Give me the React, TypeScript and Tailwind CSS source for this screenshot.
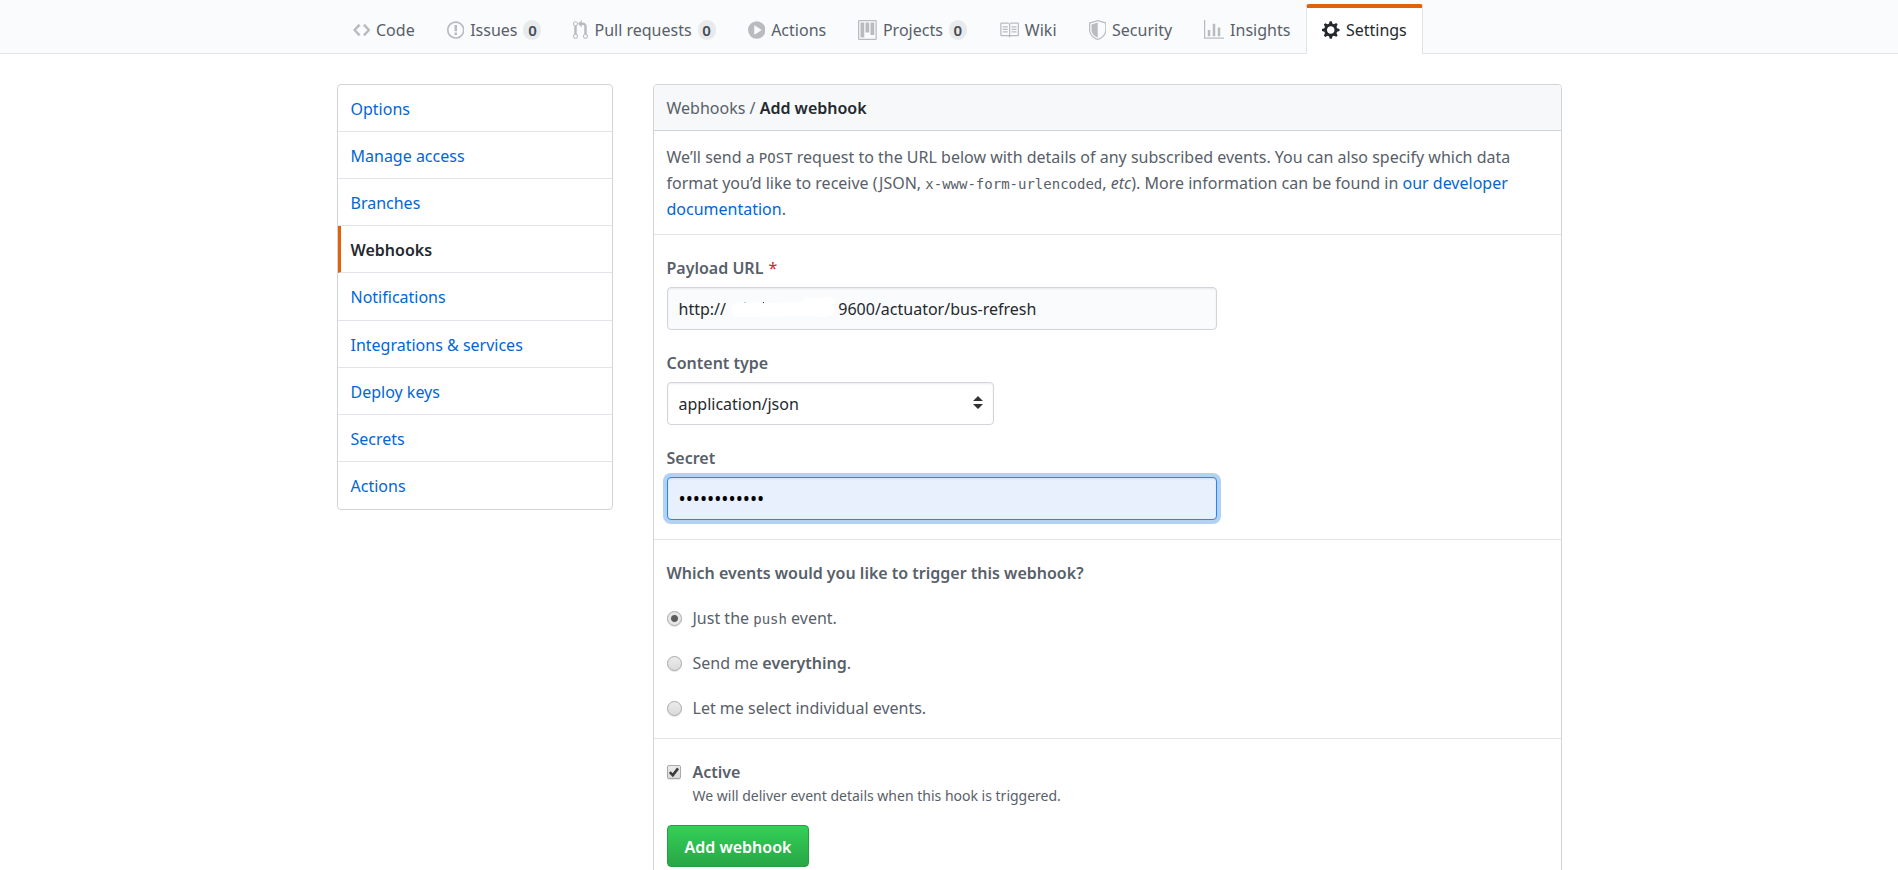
import type { ReactNode } from "react";

type IconProps = { path: string; width: number; evenOdd?: boolean };

function Octicon({ path, width, evenOdd }: IconProps) {
  return (
    <svg
      aria-hidden="true"
      viewBox={`0 0 ${width} 16`}
      className="h-5 w-auto shrink-0"
      fill="currentColor"
      fillRule={evenOdd ? "evenodd" : "nonzero"}
    >
      <path d={path} />
    </svg>
  );
}

type Tab = IconProps & { label: string; count?: number; selected?: boolean };

const tabs: Tab[] = [
  {
    label: "Code",
    width: 14,
    path: "M9.5 3L8 4.5 11.5 8 8 11.5 9.5 13 14 8 9.5 3zm-5 0L0 8l4.5 5L6 11.5 2.5 8 6 4.5 4.5 3z",
  },
  {
    label: "Issues",
    count: 0,
    width: 14,
    path: "M7 2.3c3.14 0 5.7 2.56 5.7 5.7s-2.56 5.7-5.7 5.7A5.71 5.71 0 0 1 1.3 8c0-3.14 2.56-5.7 5.7-5.7zM7 1C3.14 1 0 4.14 0 8s3.14 7 7 7 7-3.14 7-7-3.14-7-7-7zm1 3H6v5h2V4zm0 6H6v2h2v-2z",
    evenOdd: true,
  },
  {
    label: "Pull requests",
    count: 0,
    width: 12,
    path: "M11 11.28V5c-.03-.78-.34-1.47-.94-2.06C9.46 2.35 8.78 2.03 8 2H7V0L4 3l3 3V4h1c.27.02.48.11.69.31.21.2.3.42.31.69v6.28A1.993 1.993 0 0 0 10 15a1.993 1.993 0 0 0 1-3.72zm-1 2.92c-.66 0-1.2-.55-1.2-1.2 0-.65.55-1.2 1.2-1.2.65 0 1.2.55 1.2 1.2 0 .65-.55 1.2-1.2 1.2zM4 3c0-1.11-.89-2-2-2a1.993 1.993 0 0 0-1 3.72v6.56A1.993 1.993 0 0 0 2 15a1.993 1.993 0 0 0 1-3.72V4.72c.59-.34 1-.98 1-1.72zm-.8 10c0 .66-.55 1.2-1.2 1.2-.65 0-1.2-.55-1.2-1.2 0-.65.55-1.2 1.2-1.2.65 0 1.2.55 1.2 1.2zM2 4.2C1.34 4.2.8 3.65.8 3c0-.65.55-1.2 1.2-1.2.65 0 1.2.55 1.2 1.2 0 .65-.55 1.2-1.2 1.2z",
    evenOdd: true,
  },
  {
    label: "Actions",
    width: 14,
    path: "M14 8A7 7 0 1 1 0 8a7 7 0 0 1 14 0zm-8.223 3.482l4.599-3.066a.5.5 0 0 0 0-.832L5.777 4.518A.5.5 0 0 0 5 4.934v6.132a.5.5 0 0 0 .777.416z",
    evenOdd: true,
  },
  {
    label: "Projects",
    count: 0,
    width: 15,
    path: "M10 12h3V2h-3v10zm-4-2h3V2H6v8zm-4 4h3V2H2v12zm-1 1h13V1H1v14zM14 0H1a1 1 0 0 0-1 1v14a1 1 0 0 0 1 1h13a1 1 0 0 0 1-1V1a1 1 0 0 0-1-1z",
    evenOdd: true,
  },
  {
    label: "Wiki",
    width: 16,
    path: "M3 5h4v1H3V5zm0 3h4V7H3v1zm0 2h4V9H3v1zm11-5h-4v1h4V5zm0 2h-4v1h4V7zm0 2h-4v1h4V9zm2-6v9c0 .55-.45 1-1 1H9.5l-1 1-1-1H2c-.55 0-1-.45-1-1V3c0-.55.45-1 1-1h5.5l1 1 1-1H15c.55 0 1 .45 1 1zm-8 .5L7.5 3H2v9h6V3.5zm7-.5H9.5l-.5.5V12h6V3z",
    evenOdd: true,
  },
  {
    label: "Security",
    width: 14,
    path: "M0 2l7-2 7 2v6.02C14 12.69 8.69 16 7 16c-1.69 0-7-3.31-7-7.98V2zm1 .75L7 1l6 1.75v5.268C13 12.104 8.449 15 7 15c-1.449 0-6-2.896-6-6.982V2.75zm1 .75L7 2v12c-1.207 0-5-2.482-5-5.985V3.5z",
    evenOdd: true,
  },
  {
    label: "Insights",
    width: 16,
    path: "M16 14v1H0V0h1v14h15zM5 13H3V8h2v5zm4 0H7V3h2v10zm4 0h-2V6h2v7z",
  },
  {
    label: "Settings",
    selected: true,
    width: 14,
    path: "M14 8.77v-1.6l-1.94-.64-.45-1.09.88-1.84-1.13-1.13-1.81.91-1.09-.45-.69-1.92h-1.6l-.63 1.94-1.11.45-1.84-.88-1.13 1.13.91 1.81-.45 1.09L0 7.23v1.59l1.94.64.45 1.09-.88 1.84 1.13 1.13 1.81-.91 1.09.45.69 1.92h1.59l.63-1.94 1.11-.45 1.84.88 1.13-1.13-.92-1.81.47-1.09L14 8.75v.02zM7 11c-1.66 0-3-1.34-3-3s1.34-3 3-3 3 1.34 3 3-1.34 3-3 3z",
    evenOdd: true,
  },
];

const menu = [
  "Options",
  "Manage access",
  "Branches",
  "Webhooks",
  "Notifications",
  "Integrations & services",
  "Deploy keys",
  "Secrets",
  "Actions",
];

function RepoNav() {
  return (
    <header className="border-b border-[#e1e4e8] bg-[#fafbfc] pt-1">
      <nav aria-label="Repository" className="mx-auto flex max-w-[1225px]">
        {tabs.map((tab) => (
          <a
            key={tab.label}
            href="#"
            aria-current={tab.selected ? "page" : undefined}
            className={
              tab.selected
                ? "-mb-px flex h-[50px] items-center gap-[6px] rounded-t-[3px] border-x border-t-4 border-x-[#e1e4e8] border-t-[#e36209] bg-white px-[15px] pb-[2px] text-[#24292e]"
                : "flex h-[49px] items-center gap-[6px] border-x border-t-4 border-transparent px-[15px] pb-[2px] text-[#586069]"
            }
          >
            <span className={tab.selected ? "text-[#24292e]" : "text-[#b9bcbf]"}>
              <Octicon path={tab.path} width={tab.width} evenOdd={tab.evenOdd} />
            </span>
            {tab.label}
            {tab.count !== undefined && (
              <span className="flex h-5 w-[18px] items-center justify-center rounded-full bg-[#e8eaeb] text-[15px] font-semibold text-[#444d56]">
                {tab.count}
              </span>
            )}
          </a>
        ))}
      </nav>
    </header>
  );
}

function Sidebar() {
  return (
    <nav
      aria-label="Settings"
      className="grid min-h-[426px] w-[276px] shrink-0 auto-rows-fr divide-y divide-[#e1e4e8] rounded-[4px] border border-[#d1d5da]"
    >
      {menu.map((item) => (
        <a
          key={item}
          href="#"
          className={
            item === "Webhooks"
              ? "block border-l-[3px] border-l-[#e36209] pt-[11px] pb-[9px] pl-[10px] font-semibold text-[#24292e]"
              : "block pt-[11px] pb-[9px] pl-[13px] text-[#0366d6]"
          }
        >
          {item}
        </a>
      ))}
    </nav>
  );
}

const field = "block h-[43px] rounded-[4px] border px-[11px] outline-none";

function Code({ children }: { children: ReactNode }) {
  return (
    <code className="font-['DejaVu_Sans_Mono',monospace] text-[14px] leading-none">{children}</code>
  );
}

function EventOption({
  id,
  checked,
  children,
}: {
  id: string;
  checked?: boolean;
  children: ReactNode;
}) {
  return (
    <div className="flex items-center gap-[11px]">
      <input
        type="radio"
        name="events"
        id={id}
        defaultChecked={checked}
        className="size-[15px] appearance-none rounded-full border border-[#a9a9a9] bg-linear-to-b from-[#ececec] to-[#dadada] shadow-[0_1px_1px_rgba(0,0,0,0.1)] checked:bg-[radial-gradient(circle,#5c5c5c_3px,#e6e6e6_4px)]"
      />
      <label htmlFor={id}>{children}</label>
    </div>
  );
}

export default function App() {
  return (
    <div className="min-h-screen bg-white font-['Noto_Sans','Liberation_Sans',sans-serif] text-[16px] leading-[26px] text-[#586069]">
      <RepoNav />
      <div className="mx-auto flex max-w-[1225px] items-start gap-10 pt-[30px]">
        <Sidebar />
        <main className="min-w-0 flex-1 rounded-[4px] border border-[#d1d5da]">
          <h1 className="rounded-t-[3px] border-b border-[#d1d5da] bg-[#f6f8fa] px-[13px] pt-[10px] pb-[9px]">
            <a href="#">Webhooks</a> / <strong className="font-semibold text-[#24292e]">Add webhook</strong>
          </h1>

          <p className="border-b border-[#e1e4e8] px-[13px] pt-[13px] pb-3">
            We’ll send a <Code>POST</Code> request to the URL below with details of any subscribed
            events. You can also specify which data format you’d like to receive (JSON,{" "}
            <Code>x-www-form-urlencoded</Code>, <em>etc</em>). More information can be found in{" "}
            <a href="#" className="text-[#0366d6]">
              our developer documentation
            </a>
            .
          </p>

          <form onSubmit={(event) => event.preventDefault()}>
            <div className="flex flex-col gap-5 border-b border-[#e1e4e8] px-[13px] pt-5 pb-[19px]">
              <div>
                <label htmlFor="payload" className="mb-[6px] block font-semibold">
                  Payload URL <span className="ml-px font-normal text-[#cb2431]">*</span>
                </label>
                <div className="relative w-[550px] max-w-full">
                  <input
                    id="payload"
                    type="text"
                    defaultValue={"http://" + "\u00a0".repeat(27) + "9600/actuator/bus-refresh"}
                    className={`${field} w-full border-[#d1d5da] bg-[#fafbfc] pt-px text-[#24292e] shadow-[inset_0_1px_2px_rgba(27,31,35,0.075)]`}
                  />
                  <svg
                    aria-hidden="true"
                    viewBox="0 0 110 24"
                    className="pointer-events-none absolute top-2 left-[62px] h-6 w-[110px]"
                  >
                    <path
                      d="M3 9Q20 5 38 8L74 7Q76 2 84 3L100 2Q106 3 105 8L104 19Q96 24 84 21L6 22Q2 20 3 9z"
                      fill="#fff"
                    />
                    <path d="M15 7h2v1h-2z" fill="#a5d8f3" />
                    <path d="M34 7h1v1h-1z" fill="#24292e" />
                  </svg>
                </div>
              </div>

              <div>
                <label htmlFor="content-type" className="mb-[6px] block font-semibold">
                  Content type
                </label>
                <div className="relative w-[327px] max-w-full">
                  <select
                    id="content-type"
                    className={`${field} w-full appearance-none border-[#d1d5da] bg-white pt-px text-[#24292e] shadow-[inset_0_1px_2px_rgba(27,31,35,0.075)]`}
                  >
                    <option>application/json</option>
                    <option>application/x-www-form-urlencoded</option>
                  </select>
                  <svg
                    aria-hidden="true"
                    viewBox="0 0 10 13"
                    className="pointer-events-none absolute top-[14px] right-[11px] h-[13px] w-[10px]"
                    fill="#333"
                  >
                    <path d="M5 0l5 5H0zM5 13L0 8h10z" />
                  </svg>
                </div>
              </div>

              <div>
                <label htmlFor="secret" className="mb-[6px] block font-semibold">
                  Secret
                </label>
                <input
                  id="secret"
                  type="password"
                  defaultValue="webhooktoken"
                  className={`${field} w-[550px] max-w-full border-[#2188ff] bg-[#e8f0fe] pt-px text-[19px] text-black shadow-[inset_0_1px_2px_rgba(27,31,35,0.075),0_0_0_4px_rgba(3,102,214,0.3)]`}
                />
              </div>
            </div>

            <fieldset className="flex flex-col gap-[19px] border-b border-[#e1e4e8] px-[13px] pt-5 pb-[17px]">
              <legend className="float-left font-semibold">
                Which events would you like to trigger this webhook?
              </legend>
              <EventOption id="event-push" checked>
                Just the <Code>push</Code> event.
              </EventOption>
              <EventOption id="event-all">
                Send me <strong className="font-semibold">everything</strong>.
              </EventOption>
              <EventOption id="event-select">Let me select individual events.</EventOption>
            </fieldset>

            <div className="px-[13px] pt-5 pb-10">
              <div className="flex items-center gap-3">
                <span className="relative flex">
                  <input
                    type="checkbox"
                    id="active"
                    defaultChecked
                    aria-describedby="active-note"
                    className="size-[14px] appearance-none rounded-[2px] border border-[#a9a9a9] bg-linear-to-b from-[#ececec] to-[#dadada] shadow-[0_1px_1px_rgba(0,0,0,0.1)]"
                  />
                  <svg
                    aria-hidden="true"
                    viewBox="0 0 14 14"
                    className="pointer-events-none absolute inset-0 size-[14px]"
                    fill="none"
                    stroke="#3c3c3c"
                    strokeWidth="2.6"
                  >
                    <path d="M2.8 7.2l3 3L11 3.4" />
                  </svg>
                </span>
                <label htmlFor="active" className="font-semibold">
                  Active
                </label>
              </div>
              <p id="active-note" className="pl-[26px] text-[14px] leading-[22px]">
                We will deliver event details when this hook is triggered.
              </p>
              <button
                type="submit"
                className="mt-[18px] h-[42px] rounded-[4px] border border-[#269f42] bg-linear-to-b from-[#34d058] to-[#28a745] px-[17px] pt-px font-semibold text-white"
              >
                Add webhook
              </button>
            </div>
          </form>
        </main>
      </div>
    </div>
  );
}
